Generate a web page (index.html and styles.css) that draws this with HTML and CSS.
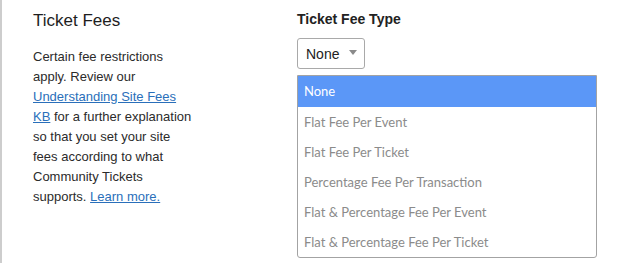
FILE: index.html
```html
<!DOCTYPE html>
<html lang="en">
<head>
    <meta charset="UTF-8">
    <title>Ticket Fees</title>
    <link rel="stylesheet" href="styles.css">
</head>
<body>
    <div class="panel">
        <div class="intro">
            <h2>Ticket Fees</h2>
            <p>Certain fee restrictions apply. Review our <a href="#">Understanding Site Fees KB</a> for a further explanation so that you set your site fees according to what Community Tickets supports. <a href="#">Learn more.</a></p>
        </div>

        <div class="field">
            <label>Ticket Fee Type</label>
            <div class="select-box">
                <span>None</span>
                <span class="arrow"></span>
            </div>
            <ul class="options">
                <li class="selected">None</li>
                <li>Flat Fee Per Event</li>
                <li>Flat Fee Per Ticket</li>
                <li>Percentage Fee Per Transaction</li>
                <li>Flat &amp; Percentage Fee Per Event</li>
                <li>Flat &amp; Percentage Fee Per Ticket</li>
            </ul>
        </div>
    </div>
</body>
</html>
```

FILE: styles.css
```css
body {
    margin: 0;
    background: #fff;
    font-family: "Liberation Sans", Arial, sans-serif;
    color: #222;
}
.panel {
    display: flex;
    height: 263px;
    border-left: 2px solid #cdcdcd;
    box-sizing: border-box;
}
.intro {
    width: 162px;
    padding: 11px 0 0 31px;
}
.intro h2 {
    margin: 0;
    font-size: 17px;
    font-weight: normal;
    line-height: 20px;
    color: #1e1e1e;
}
.intro p {
    margin: 16px 0 0;
    font-size: 13px;
    line-height: 20px;
    color: #2b2b2b;
}
.intro a {
    color: #2a6fba;
}
.field {
    margin-left: 102px;
    padding-top: 9px;
    width: 300px;
}
.field label {
    display: block;
    font-size: 14px;
    font-weight: bold;
    line-height: 20px;
    color: #222;
}
.select-box {
    display: flex;
    align-items: center;
    justify-content: space-between;
    width: 68px;
    height: 31px;
    margin-top: 9px;
    padding: 0 7px 0 8px;
    border: 1px solid #a9a9a9;
    border-radius: 3px;
    box-sizing: border-box;
    font-size: 14px;
    color: #222;
}
.arrow {
    width: 0;
    height: 0;
    border-left: 4px solid transparent;
    border-right: 4px solid transparent;
    border-top: 5px solid #8a8a8a;
    margin-top: -2px;
}
.options {
    list-style: none;
    margin: 6px 0 0;
    padding: 0;
    border: 1px solid #a3a3a3;
    border-radius: 0 0 3px 3px;
    font-family: Lato, "Open Sans", sans-serif;
    font-size: 13px;
}
.options li {
    height: 30px;
    line-height: 30px;
    padding-left: 6px;
    color: #8b8b8b;
}
.options li.selected {
    height: 31px;
    line-height: 31px;
    background: #5b97f7;
    color: #fff;
}
```
